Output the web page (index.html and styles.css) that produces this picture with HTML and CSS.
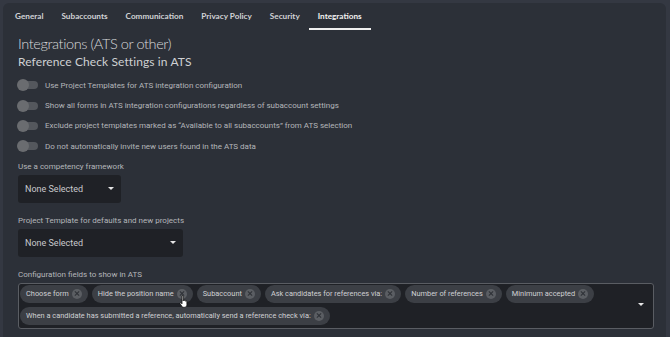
FILE: index.html
```html
<!DOCTYPE html>
<html>
<head>
  <meta charset="UTF-8">
  <title>Integrations</title>
  <link rel="stylesheet" href="styles.css">
</head>
<body>
<div class="card">
  <ul class="tabs">
    <li>General</li>
    <li>Subaccounts</li>
    <li>Communication</li>
    <li>Privacy Policy</li>
    <li>Security</li>
    <li class="active">Integrations</li>
  </ul>

  <div class="content">
    <h1>Integrations (ATS or other)</h1>
    <h2>Reference Check Settings in ATS</h2>

    <div class="toggles">
      <label class="toggle"><i class="switch"></i>Use Project Templates for ATS integration configuration</label>
      <label class="toggle"><i class="switch"></i>Show all forms in ATS integration configurations regardless of subaccount settings</label>
      <label class="toggle"><i class="switch"></i>Exclude project templates marked as “Available to all subaccounts” from ATS selection</label>
      <label class="toggle"><i class="switch"></i>Do not automatically invite new users found in the ATS data</label>
    </div>

    <div class="field first">
      <p class="label">Use a competency framework</p>
      <div class="select small">None Selected<i class="caret"></i></div>
    </div>

    <div class="field">
      <p class="label">Project Template for defaults and new projects</p>
      <div class="select wide">None Selected<i class="caret"></i></div>
    </div>

    <div class="field">
      <p class="label">Configuration fields to show in ATS</p>
      <div class="multi">
        <div class="chips">
          <span class="chip">Choose form<i class="x"></i></span>
          <span class="chip">Hide the position name<i class="x"></i></span>
          <span class="chip">Subaccount<i class="x"></i></span>
          <span class="chip">Ask candidates for references via:<i class="x"></i></span>
          <span class="chip">Number of references<i class="x"></i></span>
          <span class="chip">Minimum accepted<i class="x"></i></span>
          <span class="chip">When a candidate has submitted a reference, automatically send a reference check via:<i class="x"></i></span>
        </div>
        <i class="caret"></i>
      </div>
    </div>
  </div>
</div>

<!-- mouse pointer over the second chip -->
<svg class="pointer" width="10" height="13" viewBox="0 0 10 13">
  <path d="M3 1.2c0-.7 1.2-.7 1.2 0V6l.2-.9c.2-.6 1.2-.5 1.2.1v.6c.1-.6 1.1-.6 1.2 0v.6c.1-.5 1-.5 1.1.1v3.2c0 1.4-1 2.6-2.4 2.6H4.6c-.8 0-1.4-.4-1.8-1L1.1 8.7c-.4-.6.4-1.3 1-.8L3 8.8z" fill="#fff" stroke="#111" stroke-width=".8"/>
</svg>
</body>
</html>
```

FILE: styles.css
```css
body {
  margin: 0;
  background: #343842;
  font-family: Roboto, "Liberation Sans", sans-serif;
  color: #c4c5c8;
  overflow: hidden;
}

.card {
  margin: 3px 4px 0 3px;
  height: 340px;
  background: #2c3038;
  border-radius: 6px 6px 0 0;
}

.tabs {
  display: flex;
  margin: 0;
  padding: 0 0 0 3px;
  list-style: none;
}
.tabs li {
  padding: 8px 9px 0;
  height: 17px;
  font-family: Lato, sans-serif;
  font-size: 8.2px;
  font-weight: 700;
  color: #d2d3d6;
  border-bottom: 2px solid transparent;
}
.tabs li.active {
  color: #f2f2f2;
  border-bottom-color: #f0f0f0;
}

.content {
  padding: 0 12px 0 15px;
}

h1 {
  margin: 5px 0 0;
  font-family: Lato, sans-serif;
  font-size: 14.5px;
  font-weight: 300;
  letter-spacing: -0.4px;
  line-height: 18px;
  color: #d8d9db;
}
h2 {
  margin: 0;
  font-family: Lato, sans-serif;
  font-size: 12px;
  font-weight: 400;
  letter-spacing: 0.1px;
  line-height: 18px;
  color: #cfd0d3;
}

.toggles {
  margin-top: 4px;
}
.toggle {
  display: flex;
  align-items: center;
  height: 20.4px;
  font-size: 8px;
  color: #b4b6ba;
}
.switch {
  position: relative;
  width: 20px;
  height: 8px;
  margin: 0 7px 0 0;
  border-radius: 4px;
  background: #54575d;
}
.switch::before {
  content: "";
  position: absolute;
  left: -1px;
  top: -2px;
  width: 12px;
  height: 12px;
  border-radius: 50%;
  background: #6a6c70;
}

.field {
  margin-top: 12px;
}
.field.first {
  margin-top: 4px;
}
.label {
  margin: 0 0 2px;
  font-size: 8px;
  line-height: 12px;
  color: #b4b6ba;
}

.select {
  display: flex;
  align-items: center;
  justify-content: space-between;
  height: 28px;
  padding: 0 7px;
  box-sizing: border-box;
  background: #1f2126;
  border-radius: 3px;
  font-size: 9px;
  color: #c8c9cc;
}
.select.small { width: 103px; }
.select.wide { width: 165px; }

.caret {
  width: 0;
  height: 0;
  border-left: 3px solid transparent;
  border-right: 3px solid transparent;
  border-top: 3px solid #e6e6e6;
}

.multi {
  display: flex;
  align-items: center;
  padding: 1px 9px 3px 1px;
  background: #1f2126;
  border: 1px solid #5a5d63;
  border-radius: 3px;
}
.chips {
  flex: 1;
  display: flex;
  flex-wrap: wrap;
  gap: 4px;
}
.chip {
  display: inline-flex;
  align-items: center;
  height: 18px;
  padding: 0 6px 0 6px;
  border-radius: 9px;
  background: #3c3f45;
  font-size: 7.4px;
  color: #d0d1d4;
}
.x {
  position: relative;
  width: 10px;
  height: 10px;
  margin-left: 3px;
  border-radius: 50%;
  background: #5b5e63;
}
.x::before,
.x::after {
  content: "";
  position: absolute;
  left: 2px;
  top: 4.5px;
  width: 6px;
  height: 1px;
  background: #2f3237;
  transform: rotate(45deg);
}
.x::after {
  transform: rotate(-45deg);
}

.pointer {
  position: absolute;
  left: 179px;
  top: 295px;
}
```
